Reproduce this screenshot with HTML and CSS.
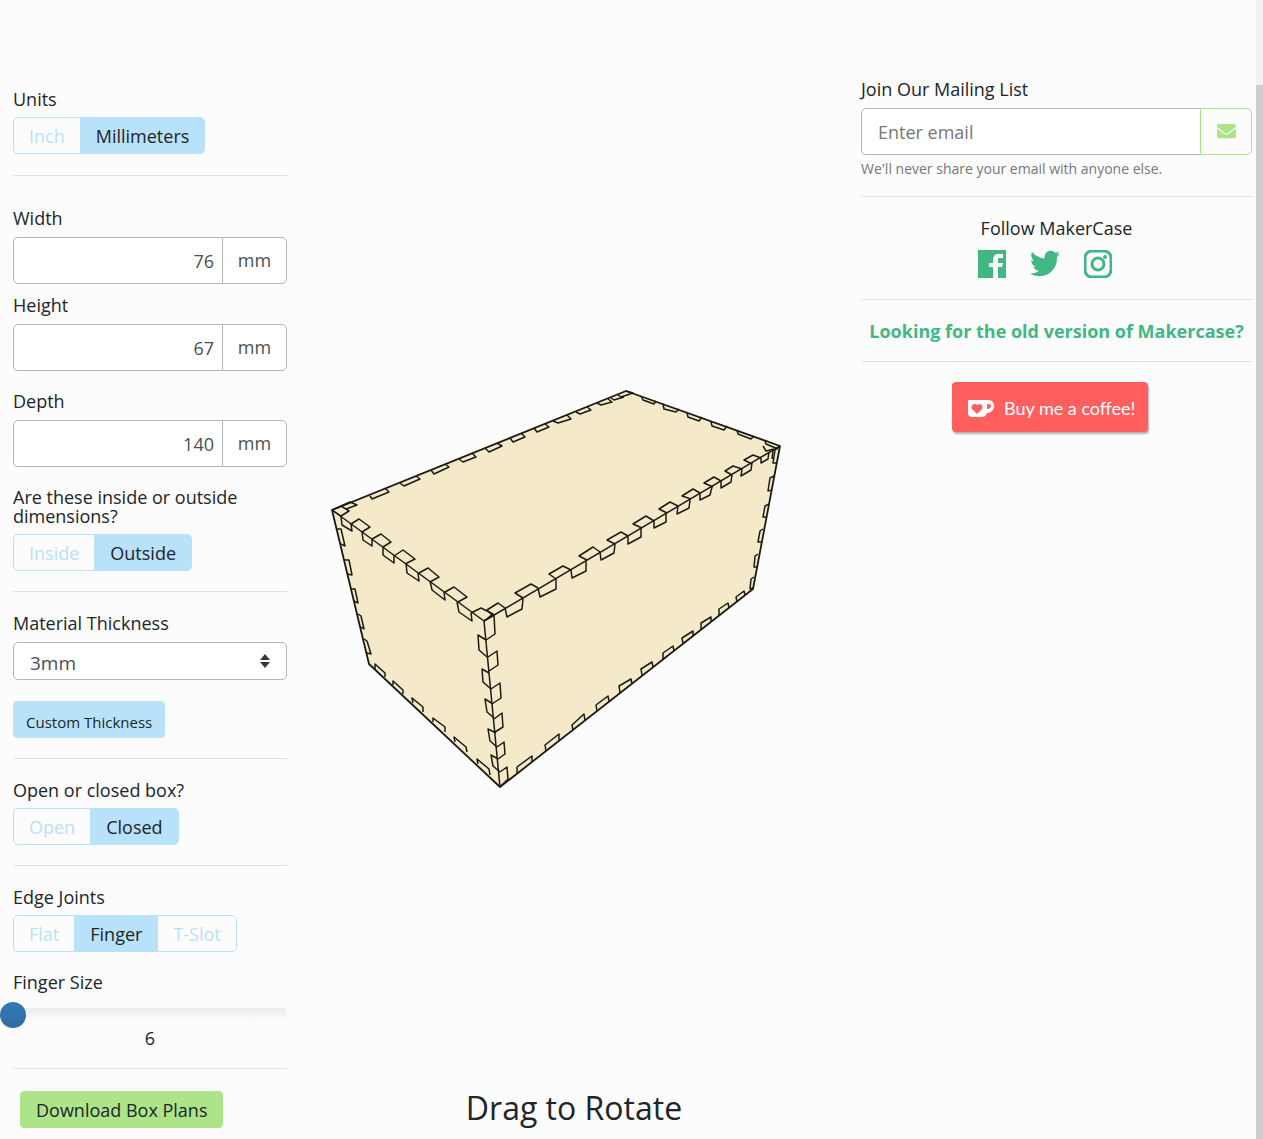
FILE: index.html
```html
<!DOCTYPE html>
<html lang="en">

<head>
    <meta charset="UTF-8">
    <meta name="viewport" content="width=device-width, initial-scale=1.0">
    <title>MakerCase - Basic Box</title>
    <link rel="stylesheet" href="styles.css">
</head>

<body>

<div class="page">
    <form class="options">
        <div class="field" role="group" aria-labelledby="unitsLabel">
            <span class="label" id="unitsLabel">Units</span>
            <div class="btn-group">
                <button type="button" class="btn btn-toggle">Inch</button>
                <button type="button" class="btn btn-toggle active">Millimeters</button>
            </div>
        </div>
        <hr class="wide">

        <div class="field tight">
            <label class="label" for="boxWidth">Width</label>
            <div class="input-group">
                <input class="number" type="text" id="boxWidth" value="76">
                <span class="addon">mm</span>
            </div>
        </div>
        <div class="field spaced">
            <label class="label" for="boxHeight">Height</label>
            <div class="input-group">
                <input class="number" type="text" id="boxHeight" value="67">
                <span class="addon">mm</span>
            </div>
        </div>
        <div class="field spaced">
            <label class="label" for="boxDepth">Depth</label>
            <div class="input-group">
                <input class="number" type="text" id="boxDepth" value="140">
                <span class="addon">mm</span>
            </div>
        </div>
        <div class="field" role="group" aria-labelledby="sideLabel">
            <span class="label" id="sideLabel">Are these inside or outside dimensions?</span>
            <div class="btn-group">
                <button type="button" class="btn btn-toggle">Inside</button>
                <button type="button" class="btn btn-toggle active">Outside</button>
            </div>
        </div>
        <hr>

        <div class="field spaced">
            <label class="label" for="thickness">Material Thickness</label>
            <div class="select-wrap">
                <select id="thickness">
                    <option>3mm</option>
                </select>
                <svg class="caret" viewBox="0 0 10 14" aria-hidden="true"><path d="M5 0l5 6H0zM5 14L0 8h10z"/></svg>
            </div>
        </div>
        <button type="button" class="btn btn-custom">Custom Thickness</button>
        <hr>

        <div class="field" role="group" aria-labelledby="lidLabel">
            <span class="label" id="lidLabel">Open or closed box?</span>
            <div class="btn-group">
                <button type="button" class="btn btn-toggle">Open</button>
                <button type="button" class="btn btn-toggle active">Closed</button>
            </div>
        </div>
        <hr>

        <div class="field spaced" role="group" aria-labelledby="jointLabel">
            <span class="label" id="jointLabel">Edge Joints</span>
            <div class="btn-group">
                <button type="button" class="btn btn-toggle">Flat</button>
                <button type="button" class="btn btn-toggle active">Finger</button>
                <button type="button" class="btn btn-toggle">T-Slot</button>
            </div>
        </div>
        <div class="field">
            <label class="label" for="fingerSize">Finger Size</label>
            <input class="slider" type="range" id="fingerSize" min="6" max="30" value="6">
            <output class="slider-value" for="fingerSize">6</output>
        </div>
        <hr>

        <button type="button" class="btn btn-download">Download Box Plans</button>
    </form>

    <main class="preview">
        <svg class="box" viewBox="287 380 574 420" role="img" aria-label="Box preview">
            <path class="faces" d="M332 510L626 391L780 446L753 589L500 787L369 664Z"/>
            <path class="edges" d="M332 510L484 621L780 446M484 621L500 787"/>
            <!-- corners -->
            <path class="edges" d="M332 510L341 506L349 511L341 516Z M341 506L350 502L357 505L346 509
                M471 613L481 608L493 614L484 621 M618 395L621 397L633 393L626 391
                M611 398L614 400L624 397 M765 441L766 444L778 449 M763 446L766 451L774 449"/>
            <!-- top, back left -->
            <path class="edges" d="M370 496L372 499L389 492L385 488 M400 483L404 486L420 479L416 476
                M431 470L434 474L449 467L445 464 M459 459L463 462L476 457L472 453
                M485 448L489 452L502 446L497 443 M510 438L513 442L525 437L521 433
                M534 428L537 432L549 427L545 424 M553 421L558 423L571 419L567 415
                M576 412L580 414L591 410L587 407 M597 403L601 405L612 402L608 399"/>
            <!-- top, back right -->
            <path class="edges" d="M641 396L643 400L654 404L656 401 M663 404L664 409L676 412L679 409
                M687 413L688 417L699 421L702 417 M711 422L712 426L724 430L727 426
                M737 430L738 434L751 439L754 436"/>
            <!-- top, front right -->
            <path class="edges" d="M752 464L744 460L753 455L761 458 M732 475L725 471L733 466L742 469
                M713 487L704 483L714 477L721 481 M691 499L682 496L693 489L700 493
                M667 513L659 509L670 502L678 506 M642 528L633 524L646 516L654 521
                M615 544L607 540L621 532L628 536 M587 560L579 556L593 547L600 552
                M556 579L549 574L563 566L571 570 M523 598L515 593L531 584L538 588
                M493 616L487 610L498 603L505 608"/>
            <path class="edges" d="M761 458L761 463L768 459L769 452 M742 469L741 476L751 470L752 463
                M721 481L721 488L731 482L732 475 M700 493L700 500L710 495L712 487
                M678 506L677 514L689 508L690 500 M654 521L654 528L666 522L666 513
                M628 536L628 544L641 537L641 528 M600 552L601 560L614 553L615 544
                M571 570L572 578L586 571L586 560 M538 588L540 597L556 589L556 579
                M505 608L507 617L522 609L523 599"/>
            <!-- top, front left -->
            <path class="edges" d="M351 524L359 519L370 527L362 532 M372 539L381 534L391 542L383 547
                M394 556L403 550L415 559L405 564 M419 573L428 568L439 577L430 582
                M445 592L454 587L467 597L458 602"/>
            <path class="edges" d="M341 517L342 525L352 531L351 524 M362 532L363 540L372 546L372 539
                M383 547L383 555L394 563L394 555 M406 563L407 573L419 581L418 573
                M430 581L432 590L445 600L444 592 M457 602L459 612L472 621L471 613"/>
            <!-- front corner -->
            <path class="edges" d="M484 621L494 615L495 634L486 640 M488 657L497 651L498 665L489 671
                M491 689L500 683L501 698L492 704 M494 719L502 713L503 727L495 732
                M497 747L504 742L505 754L498 759 M500 772L507 767L508 779L501 786"/>
            <path class="edges" d="M486 640L478 635L479 650L487 657 M489 673L482 669L483 682L491 689
                M493 704L485 699L487 712L494 718 M496 733L488 729L490 741L497 747
                M498 759L491 755L493 766L500 772"/>
            <!-- left and right corners -->
            <path class="edges" d="M337 529L341 529L345 546L341 544 M344 560L349 560L352 575L347 574
                M351 589L355 589L358 603L354 601 M358 614L361 616L364 629L361 627
                M364 639L367 641L371 654L367 653"/>
            <path class="edges" d="M779 447L775 450L773 463L777 463 M773 450L772 459 M774 476L770 478L768 491L772 490
                M769 504L765 506L763 517L767 517 M763 529L760 531L758 542L762 542
                M758 554L755 556L754 567L757 567 M754 577L751 579L750 589L753 588"/>
            <!-- bottom -->
            <path class="edges" d="M375 669L375 664L385 673L385 677 M393 685L393 681L403 690L403 694
                M413 703L412 698L423 707L423 712 M433 722L433 718L445 727L445 732
                M455 742L454 737L466 747L467 752 M478 764L477 759L489 769L490 775"/>
            <path class="edges" d="M517 773L517 767L532 756L532 762 M546 751L545 745L559 734L559 740
                M573 730L572 725L584 714L585 721 M597 711L596 705L608 696L609 701
                M620 693L619 686L631 679L632 684 M642 675L641 669L652 662L653 667
                M663 659L663 653L673 646L674 651 M683 643L682 638L693 631L693 636
                M701 629L701 623L711 617L711 622 M719 615L719 609L728 603L729 608
                M737 602L736 597L744 591L745 595"/>
            <path class="outline" d="M332 510L626 391L780 446L753 589L500 787L369 664Z"/>
        </svg>
        <p class="hint">Drag to Rotate</p>
    </main>

    <aside class="links">
        <form class="mailing">
            <label class="label" for="email">Join Our Mailing List</label>
            <div class="input-group">
                <input class="email" type="email" id="email" placeholder="Enter email">
                <button type="button" class="btn-mail" aria-label="Subscribe">
                    <svg viewBox="0 0 512 384" aria-hidden="true"><path d="M502 127c4-3 10 0 10 5v204c0 27-21 48-48 48H48c-27 0-48-21-48-48V132c0-5 6-8 10-5 22 17 52 40 155 114 21 16 57 48 91 48 34 0 71-33 91-48 103-75 133-97 155-114zM256 256c23 0 57-29 74-42 132-96 142-104 173-128 6-5 9-12 9-19V48c0-27-21-48-48-48H48C21 0 0 21 0 48v19c0 7 3 14 9 19 31 24 41 32 173 128 17 13 51 42 74 42z"/></svg>
                </button>
            </div>
            <small>We'll never share your email with anyone else.</small>
        </form>
        <hr>
        <div class="follow">
            <span class="label">Follow MakerCase</span>
            <div class="social">
                <a href="#" aria-label="Facebook">
                    <svg viewBox="0 0 28 28"><path d="M0 0h28v28h-8V17h4l1-4h-5v-3c0-2 1-2 2-2h3V4h-4c-4 0-6 2-6 6v3h-4v4h4v11H0z"/></svg>
                </a>
                <a href="#" aria-label="Twitter">
                    <svg class="twitter" viewBox="0 0 512 416"><path d="M459 104c1 4 1 9 1 13 0 139-106 299-299 299-60 0-115-17-161-47 8 1 16 1 25 1 49 0 94-17 130-45-46-1-85-31-98-73 6 1 13 2 20 2 9 0 19-1 28-4-48-10-84-52-84-103v-1c14 8 30 13 47 13C40 128 21 94 21 55c0-20 5-38 14-53 52 64 130 105 217 110-2-8-3-16-3-24C249 30 296-17 354-17c30 0 58 13 77 33 24-5 46-13 66-25-8 24-24 45-46 58 21-2 42-8 60-16-14 21-32 39-52 54z"/></svg>
                </a>
                <a href="#" aria-label="Instagram">
                    <svg viewBox="0 0 28 28"><rect class="line" x="1" y="1" width="26" height="26" rx="7"/><circle class="line" cx="14" cy="14" r="6"/><circle cx="21" cy="7" r="2"/></svg>
                </a>
            </div>
        </div>
        <hr>
        <a class="old-version" href="#">Looking for the old version of Makercase?</a>
        <hr>
        <a class="coffee" href="#">
            <svg viewBox="0 0 26 18" aria-hidden="true"><path fill="#fff" fill-rule="evenodd" d="M1 0h19c4 0 6 3 6 6 0 4-3 7-7 7-1 3-3 4-5 4H4c-2 0-4-1-4-4V1c0-1 0-1 1-1zm18 4v5c2 0 4-1 4-3s-2-2-4-2z"/><path fill="#ff5f5f" d="M9 14L4 9C2 6 6 2 9 5c3-3 7 1 5 4z"/></svg>
            Buy me a coffee!
        </a>
    </aside>
</div>

<div class="scrollbar"></div>

</body>
</html>
```
FILE: styles.css
```css
* {
    box-sizing: border-box;
}

body {
    margin: 0;
    font-family: 'Open Sans', 'Noto Sans', sans-serif;
    font-size: 18px;
    line-height: 19px;
    color: #212529;
    background-color: #fcfcfc;
}

.page {
    display: grid;
    grid-template-columns: 274px 1fr 391px;
    padding: 0 11px 12px 13px;
}

button, input, select {
    font-family: inherit;
    font-size: inherit;
    margin: 0;
}

hr {
    margin: 20px 0 22px;
    border: 0;
    border-top: 1px solid #e0e0e0;
}

hr.wide {
    margin: 21px 0 33px;
}

.options {
    padding-top: 90px;
}

.label {
    display: block;
    margin-bottom: 8px;
}

label.label {
    margin-bottom: 9px;
}

.tight {
    margin-bottom: 12px;
}

.spaced {
    margin-bottom: 21px;
}

.btn-group, .input-group {
    display: flex;
}

.btn {
    height: 37px;
    padding: 0 15px;
    border: 1px solid #b8e1fa;
    border-radius: 4px;
    background-color: #b8e1fa;
    color: #212529;
    cursor: pointer;
}

.btn-toggle {
    background-color: transparent;
    color: #b8e1fa;
    border-radius: 0;
}

.btn-toggle + .btn-toggle {
    margin-left: -1px;
}

.btn-toggle:first-child {
    border-radius: 5px 0 0 5px;
}

.btn-toggle:last-child {
    border-radius: 0 5px 5px 0;
}

.btn-toggle.active {
    background-color: #b8e1fa;
    color: #212529;
}

.number, .email {
    flex: 1;
    min-width: 0;
    height: 47px;
    padding: 0 8px;
    border: 1px solid #b5b5b5;
    border-radius: 5px 0 0 5px;
    background-color: #fff;
    color: #495057;
}

.number {
    text-align: right;
}

.email {
    padding: 0 16px;
}

.email::placeholder {
    color: #777;
}

.addon {
    display: flex;
    align-items: center;
    justify-content: center;
    width: 65px;
    margin-left: -1px;
    border: 1px solid #b5b5b5;
    border-radius: 0 5px 5px 0;
    background-color: #fff;
    color: #495057;
}

.select-wrap {
    position: relative;
}

select {
    display: block;
    width: 100%;
    height: 38px;
    padding: 4px 16px 0;
    border: 1px solid #b5b5b5;
    border-radius: 5px;
    background-color: #fff;
    color: #495057;
    font-size: 19px;
    appearance: none;
}

.caret {
    position: absolute;
    top: 12px;
    right: 17px;
    width: 10px;
    height: 14px;
    fill: #343a40;
    pointer-events: none;
}

.btn-custom {
    padding: 4px 12px 0;
    font-size: 15px;
}

.slider {
    display: block;
    width: calc(100% + 13px);
    height: 26px;
    margin-left: -13px;
    appearance: none;
    background: transparent;
}

.slider::-webkit-slider-runnable-track {
    height: 13px;
    border-radius: 4px;
    background: linear-gradient(#ececec, #fcfcfc) 13px 0 no-repeat;
}

.slider::-webkit-slider-thumb {
    appearance: none;
    width: 26px;
    height: 26px;
    margin-top: -6px;
    border-radius: 50%;
    background: linear-gradient(#337ab7, #2e6da4);
}

.slider-value {
    display: block;
    margin-top: 2px;
    text-align: center;
}

.btn-download {
    margin-left: 7px;
    border-color: #ade48a;
    background-color: #ade48a;
}

.preview {
    display: flex;
    flex-direction: column;
    align-items: center;
    justify-content: space-between;
    padding-top: 380px;
}

.box {
    width: 100%;
    max-width: 574px;
}

.faces {
    fill: #f4e9c9;
}

.edges, .outline {
    fill: none;
    stroke: #1c1a14;
    stroke-width: 1.5;
    stroke-linejoin: round;
}

.outline {
    stroke-width: 1.8;
}

.hint {
    margin: 0;
    font-size: 32px;
    line-height: 40px;
}

.links {
    padding-top: 80px;
}

.links .label {
    margin-bottom: 9px;
}

.btn-mail {
    width: 52px;
    margin-left: -1px;
    border: 1px solid #ade48a;
    border-radius: 0 5px 5px 0;
    background-color: transparent;
    cursor: pointer;
}

.btn-mail svg {
    display: block;
    width: 19px;
    margin: 0 auto;
    fill: #ade48a;
}

small {
    display: block;
    margin-top: 4px;
    font-size: 14px;
    color: #777;
}

.links hr {
    margin: 18px 0 22px;
}

.links hr:last-of-type {
    margin: 20px 0;
}

.follow {
    text-align: center;
}

.social {
    display: flex;
    justify-content: center;
    gap: 24px;
    padding: 3px 24px 3px 0;
}

.social svg {
    display: block;
    width: 28px;
    height: 28px;
    fill: #41b883;
}

.social .twitter {
    width: 30px;
    overflow: visible;
}

.social .line {
    fill: none;
    stroke: #41b883;
    stroke-width: 3;
}

.old-version {
    display: block;
    color: #41b883;
    font-weight: bold;
    text-align: center;
    text-decoration: none;
    white-space: nowrap;
}

.coffee {
    display: flex;
    align-items: center;
    gap: 10px;
    width: 196px;
    height: 50px;
    margin-left: 91px;
    padding: 3px 0 0 16px;
    border-radius: 4px;
    background-color: #ff5f5f;
    box-shadow: 1px 2px 2px rgba(0, 0, 0, 0.3);
    color: #fff;
    font-family: Lato, sans-serif;
    font-size: 18px;
    text-decoration: none;
}

.coffee svg {
    width: 26px;
}

.scrollbar {
    position: fixed;
    top: 0;
    right: 0;
    bottom: 0;
    width: 7px;
    background: linear-gradient(#f1f1f1 85px, #cdcdcd 85px);
}
```
